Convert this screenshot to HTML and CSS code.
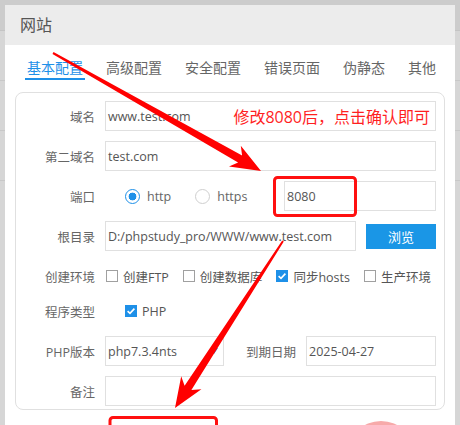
FILE: index.html
```html
<!DOCTYPE html>
<html lang="zh-CN">
<head>
<meta charset="utf-8">
<title>网站</title>
<link rel="stylesheet" href="styles.css">
</head>
<body>
<div class="dialog">
  <div class="title">网站</div>
  <div class="tabs">
    <span class="tab active">基本配置</span>
    <span class="tab">高级配置</span>
    <span class="tab">安全配置</span>
    <span class="tab">错误页面</span>
    <span class="tab">伪静态</span>
    <span class="tab">其他</span>
  </div>
  <div class="panel">
    <div class="row">
      <span class="lbl">域名</span>
      <div class="field grow split"><span>www.test.com</span><span class="note">修改8080后，点击确认即可</span></div>
    </div>
    <div class="row">
      <span class="lbl">第二域名</span>
      <div class="field grow">test.com</div>
    </div>
    <div class="row">
      <span class="lbl">端口</span>
      <div class="opts">
        <span class="opt"><span class="radio on"></span>http</span>
        <span class="opt"><span class="radio"></span>https</span>
      </div>
      <div class="field port">8080</div>
    </div>
    <div class="row">
      <span class="lbl">根目录</span>
      <div class="field grow">D:/phpstudy_pro/WWW/www.test.com</div>
      <span class="btn">浏览</span>
    </div>
    <div class="row">
      <span class="lbl">创建环境</span>
      <div class="checks">
        <span class="chk"><span class="cb"></span>创建FTP</span>
        <span class="chk"><span class="cb"></span>创建数据库</span>
        <span class="chk"><span class="cb on"><svg viewBox="0 0 12 12" width="12" height="12"><path d="M2.6 6.1 L5 8.4 L9.4 3.6" fill="none" stroke="#fff" stroke-width="1.6"/></svg></span>同步hosts</span>
        <span class="chk"><span class="cb"></span>生产环境</span>
      </div>
    </div>
    <div class="row tight">
      <span class="lbl">程序类型</span>
      <div class="opts">
        <span class="chk"><span class="cb on"><svg viewBox="0 0 12 12" width="12" height="12"><path d="M2.6 6.1 L5 8.4 L9.4 3.6" fill="none" stroke="#fff" stroke-width="1.6"/></svg></span>PHP</span>
      </div>
    </div>
    <div class="row">
      <span class="lbl">PHP版本</span>
      <div class="field select split"><span>php7.3.4nts</span><span class="caret"></span></div>
      <span class="lbl2">到期日期</span>
      <div class="field grow">2025-04-27</div>
    </div>
    <div class="row">
      <span class="lbl">备注</span>
      <div class="field grow"></div>
    </div>
  </div>
</div>
<svg class="marks" width="460" height="425" viewBox="0 0 460 425">
  <polygon fill="#ff0000" points="52.5,53.9 238.1,162.6 229.0,166.6 261,171 240.8,145.8 242.1,155.6 53.5,52.1"/>
  <polygon fill="#ff0000" points="282.2,240.5 184.6,385.7 181.2,376.3 175,408 201.4,389.3 191.4,390.1 283.8,241.5"/>
  <rect x="274.5" y="177.5" width="81" height="38" rx="3" fill="none" stroke="#ff1010" stroke-width="3"/>
  <rect x="110" y="417.5" width="106.5" height="30" rx="3" fill="none" stroke="#ff1010" stroke-width="3"/>
  <circle cx="381" cy="455" r="34" fill="#f7aaaa"/>
</svg>
</body>
</html>
```

FILE: styles.css
```css
* { box-sizing: border-box; }
html, body { margin: 0; }
body {
  position: relative;
  width: 460px;
  height: 425px;
  overflow: hidden;
  padding: 5px 5px 0;
  font-family: "Open Sans", "Noto Sans CJK SC", sans-serif;
  background:
    linear-gradient(#cccccc, #cccccc) 0 0 / 100% 30px no-repeat,
    linear-gradient(#c4c4c4, #c4c4c4) 0 30px / 100% 1px no-repeat,
    linear-gradient(#c8c8c8, #c8c8c8) 0 80px / 100% 1px no-repeat,
    linear-gradient(#c8c8c8, #c8c8c8) 0 130px / 100% 1px no-repeat,
    linear-gradient(#c8c8c8, #c8c8c8) 0 180px / 100% 1px no-repeat,
    #d6d6d6;
}
.dialog {
  width: 450px;
  height: 420px;
  background: #fff;
}
.title {
  height: 40px;
  line-height: 40px;
  padding-left: 15px;
  background: #ececec;
  font-size: 16px;
  color: #555;
}
.tabs {
  display: flex;
  gap: 19px;
  padding: 13px 0 0 20px;
}
.tab {
  padding: 0 2px;
  line-height: 20px;
  font-size: 14px;
  color: #666;
  border-bottom: 2px solid transparent;
}
.tab.active {
  color: #1e90e8;
  border-bottom-color: #1e90e8;
}
.panel {
  margin: 12px 10px 0;
  padding: 8px 8px 3px 0;
  border: 1px solid #e0e0e0;
  border-radius: 8px;
}
.row {
  display: flex;
  align-items: center;
  height: 30px;
  margin-top: 10px;
  font-size: 12.5px;
  color: #666;
}
.row:first-child { margin-top: 0; }
.row.tight { margin-top: 5px; }
.lbl {
  width: 79px;
  margin-right: 10px;
  text-align: right;
  flex: none;
}
.lbl2 {
  width: 72px;
  margin-right: 10px;
  text-align: right;
  flex: none;
}
.field {
  height: 30px;
  display: flex;
  align-items: center;
  padding: 0 5px 0 2px;
  border: 1px solid #e0e0e0;
  color: #555;
  font-size: 12.5px;
  white-space: nowrap;
}
.grow { flex: 1; min-width: 0; }
.split { justify-content: space-between; }
.note {
  font-size: 16px;
  color: #ff1f1f;
}
.port {
  width: 152px;
  margin-left: auto;
}
.select { width: 119px; flex: none; }
.caret {
  width: 0;
  height: 0;
  border-left: 4px solid transparent;
  border-right: 4px solid transparent;
  border-top: 6px solid #1e90e8;
}
.btn {
  width: 70px;
  height: 25px;
  margin-left: 10px;
  display: flex;
  align-items: center;
  justify-content: center;
  background: #1a96e6;
  color: #fff;
  font-size: 13px;
}
.opts {
  display: flex;
  align-items: center;
  margin-left: 20px;
}
.opt {
  display: flex;
  align-items: center;
  gap: 7px;
  margin-right: 24px;
  color: #666;
  white-space: nowrap;
}
.radio {
  width: 15px;
  height: 15px;
  border-radius: 50%;
  border: 1px solid #cfcfcf;
  background: #fff;
}
.radio.on {
  border-color: #1e90e8;
  background: radial-gradient(circle, #1e90e8 0 3.6px, #fff 4.2px);
}
.checks {
  display: flex;
  align-items: center;
  margin-left: 1px;
}
.chk {
  display: flex;
  flex: none;
  align-items: center;
  gap: 5px;
  margin-right: 14px;
  color: #555;
  white-space: nowrap;
}
.cb {
  flex: none;
  width: 12px;
  height: 12px;
  border: 1px solid #a0a0a0;
  background: #fff;
  display: flex;
}
.cb.on {
  border: 0;
  background: #1e90e8;
}
.marks {
  position: absolute;
  left: 0;
  top: 0;
  pointer-events: none;
}
```
